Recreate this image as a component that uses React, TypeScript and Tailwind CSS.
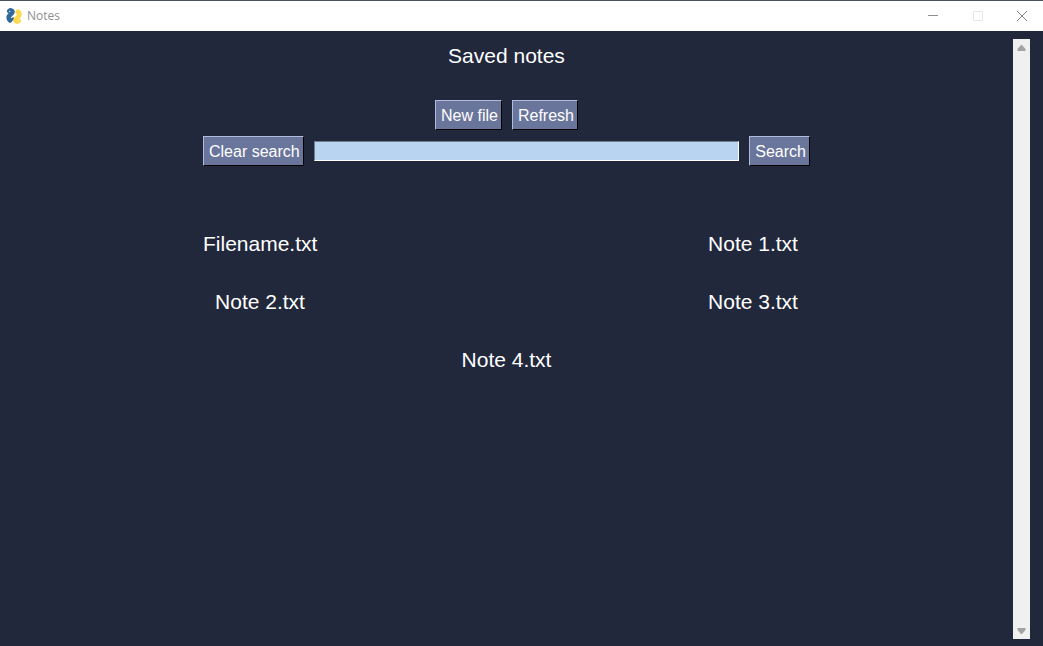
import { useState } from "react";
import type { ReactNode } from "react";

const notes = ["Filename.txt", "Note 1.txt", "Note 2.txt", "Note 3.txt", "Note 4.txt"];

function SnakesLogo() {
  return (
    <svg viewBox="0 0 16 16" className="size-4" fill="none" strokeLinecap="round" strokeLinejoin="round" aria-hidden="true">
      <path d="M3.300 3.200C4.500 2 6.200 2.200 6.500 3.600C6.900 5.600 2.600 6.800 2.600 9.300C2.600 10.800 3.200 11.700 4 12.300" stroke="#30689a" strokeWidth="4.600" />
      <path d="M4.200 12.900L7 10.600" stroke="#30689a" strokeWidth="2.600" />
      <path d="M12.700 12.800C11.500 14 9.800 13.800 9.500 12.400C9.100 10.400 13.400 9.200 13.400 6.700C13.400 5.200 12.800 4.300 12 3.700" stroke="#ffd94b" strokeWidth="4.600" />
      <path d="M11.600 3.100L10.700 4.600" stroke="#ffd94b" strokeWidth="2.600" />
      <circle cx="3.700" cy="3.400" r=".6" fill="#fff" />
      <circle cx="12.300" cy="12.600" r=".6" fill="#fff" />
    </svg>
  );
}

function TitleBar() {
  return (
    <header className="flex h-[31px] items-center border-t border-[#46545c] bg-white pl-1.5 font-['Open_Sans',sans-serif] text-xs text-[#8f8f8f]">
      <SnakesLogo />
      <h1 className="ml-[5px] grow">Notes</h1>
      <div className="flex h-full items-center pb-px">
        <button type="button" aria-label="Minimize" className="flex w-[45px] justify-center">
          <svg viewBox="0 0 12 12" className="size-3" stroke="#8f8f8f" fill="none">
            <path d="M1 5.500h10" />
          </svg>
        </button>
        <button type="button" aria-label="Maximize" disabled className="flex w-[45px] justify-center">
          <svg viewBox="0 0 12 12" className="size-3" stroke="#e6e6e6" fill="none">
            <rect x="1.500" y="1.500" width="9" height="9" rx=".5" />
          </svg>
        </button>
        <button type="button" aria-label="Close" className="flex w-[43px] justify-center">
          <svg viewBox="0 0 12 12" className="size-3" stroke="#858585" fill="none">
            <path d="M1 1l10 10M11 1L1 11" />
          </svg>
        </button>
      </div>
    </header>
  );
}

function RaisedButton({ children, onClick }: { children: ReactNode; onClick?: () => void }) {
  return (
    <button
      type="button"
      onClick={onClick}
      className="shrink-0 border border-t-[#b3bbdc] border-r-black border-b-black border-l-[#b3bbdc] bg-[#6a759b] pt-[3px] pr-[3px] pb-px pl-[5px] text-base text-white"
    >
      {children}
    </button>
  );
}

function ScrollTrack() {
  return (
    <div className="flex w-[17px] shrink-0 flex-col items-center justify-between bg-[#f0f0f0] py-1">
      <button type="button" aria-label="Scroll up">
        <svg viewBox="0 0 9 9" className="size-[9px]" fill="#a3a3a3">
          <path d="M4 2h1L8.500 6v2h-8V6Z" />
        </svg>
      </button>
      <button type="button" aria-label="Scroll down">
        <svg viewBox="0 0 9 9" className="size-[9px]" fill="#a3a3a3">
          <path d="M4 8h1L8.500 4V2h-8v2Z" />
        </svg>
      </button>
    </div>
  );
}

export default function App() {
  const [query, setQuery] = useState("");
  const shown = notes.filter((name) => name.toLowerCase().includes(query.toLowerCase()));

  return (
    <div className="flex min-h-screen flex-col bg-[#22283c] font-['Liberation_Sans',Arial,sans-serif] text-white">
      <TitleBar />
      <div className="flex grow pt-2 pr-[13px] pb-[7px]">
        <main className="flex min-w-0 grow flex-col items-center px-4 pt-[3px]">
          <h2 className="text-[21px] leading-7">Saved notes</h2>
          <div className="mt-[30px] flex gap-2.5">
            <RaisedButton>New file</RaisedButton>
            <RaisedButton>Refresh</RaisedButton>
          </div>
          <div className="mt-1.5 flex w-full max-w-[607px] items-center gap-2.5">
            <RaisedButton onClick={() => setQuery("")}>Clear search</RaisedButton>
            <input
              type="text"
              aria-label="Search notes"
              value={query}
              onChange={(event) => setQuery(event.target.value)}
              className="h-5 min-w-0 grow border border-t-[#737b8c] border-r-white border-b-white border-l-[#737b8c] bg-[#b9d4f1] px-1 text-sm text-black outline-none"
            />
            <RaisedButton>Search</RaisedButton>
          </div>
          <ul className="mt-16 grid w-full max-w-[607px] grid-cols-[114px_114px] justify-between gap-y-[30px] text-[21px] leading-7">
            {shown.map((name) => (
              <li key={name} className="text-center last:odd:col-span-2">
                {name}
              </li>
            ))}
          </ul>
        </main>
        <ScrollTrack />
      </div>
    </div>
  );
}
